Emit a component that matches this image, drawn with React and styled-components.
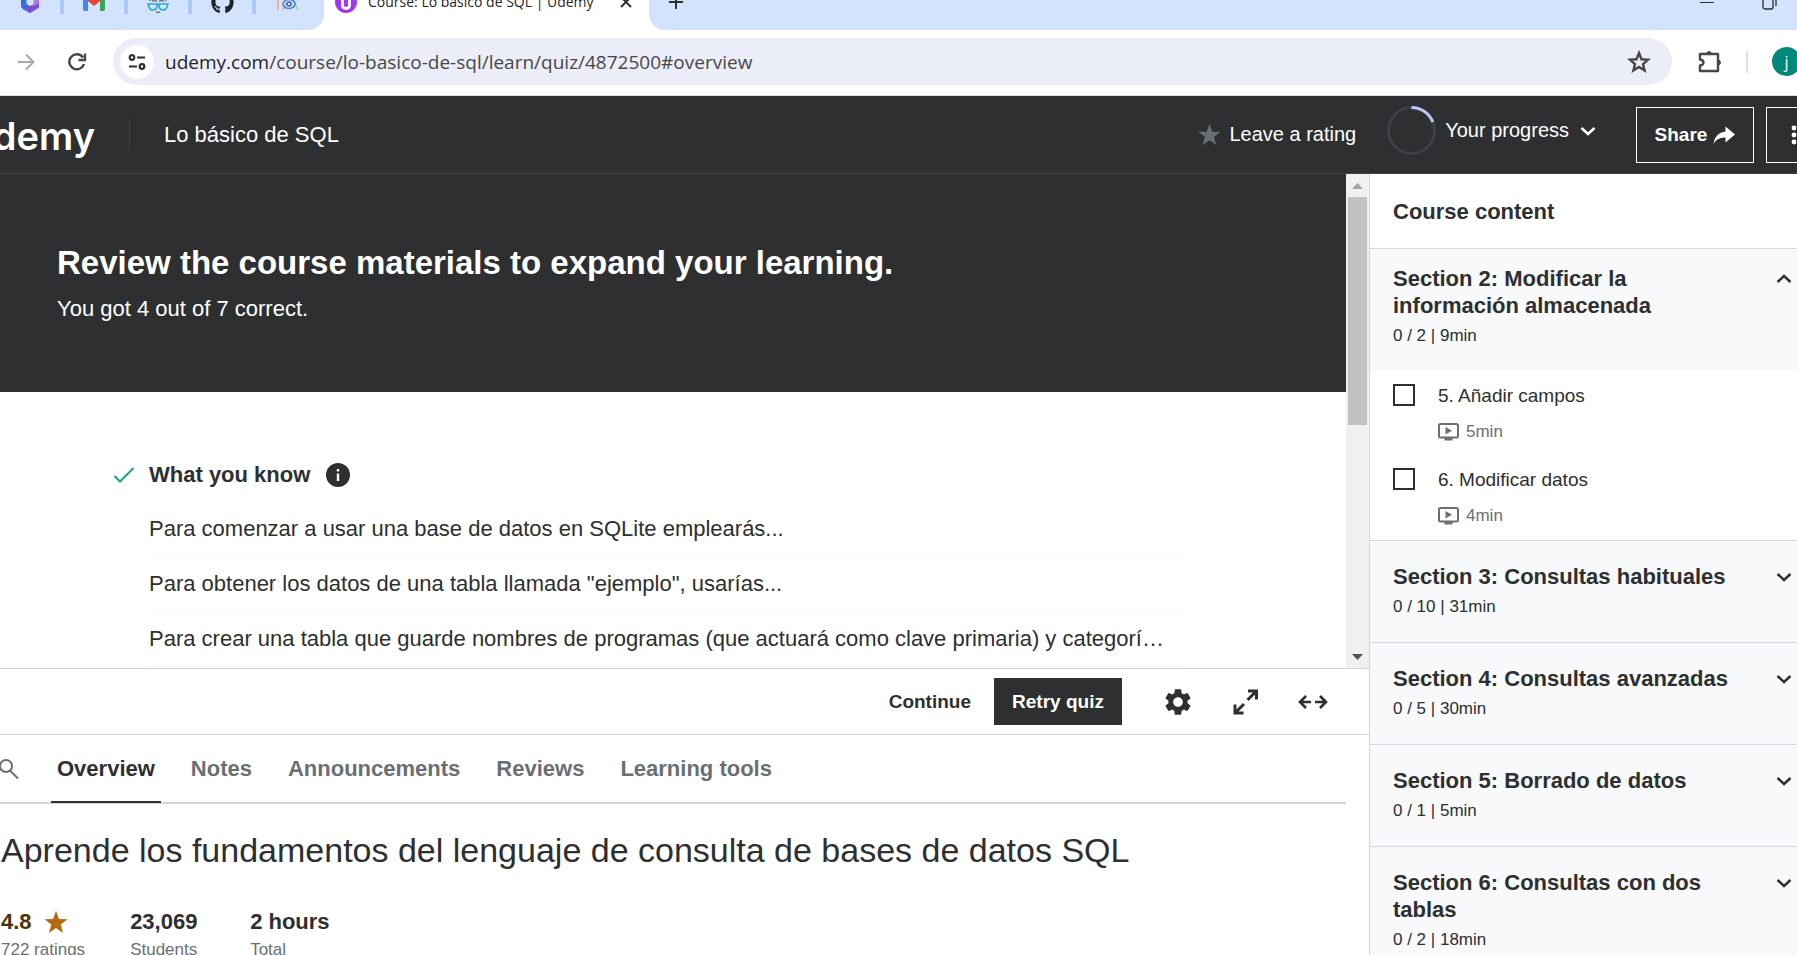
import React from "react";
import styled, { createGlobalStyle } from "styled-components";
import { FaGithub } from "react-icons/fa";
import { MdSettings } from "react-icons/md";

const ink = "#2d2f31";
const muted = "#6a6f73";
const line = "#d1d7dc";
const chrome = '"Open Sans", "Noto Sans", sans-serif';

const GlobalStyle = createGlobalStyle`
  *, *::before, *::after { box-sizing: border-box; }
  body {
    margin: 0;
    overflow: hidden;
    background: #fff;
    color: ${ink};
    font-family: "Liberation Sans", Arial, sans-serif;
    font-size: 22px;
  }
  h1, h2, h3, p, ul { margin: 0; padding: 0; font-size: inherit; }
  ul { list-style: none; }
  a { color: inherit; text-decoration: none; }
  svg { display: block; flex: none; }
  button {
    display: flex;
    align-items: center;
    justify-content: center;
    margin: 0;
    padding: 0;
    border: 0;
    background: none;
    color: inherit;
    font: inherit;
    cursor: pointer;
  }
`;

const Page = styled.div`
  display: flex;
  flex-direction: column;
  height: 100vh;
  overflow: hidden;
`;

/* Browser chrome */
const TabStrip = styled.div`
  display: flex;
  height: 30px;
  flex: none;
  overflow: hidden;
  background: #fff;
  font-family: ${chrome};
`;

const StripSegment = styled.div`
  display: flex;
  flex: ${(p) => (p.$grow ? "1" : "none")};
  width: ${(p) => (p.$grow ? "auto" : "324px")};
  overflow: hidden;
  background: #d3e3fd;
  border-radius: ${(p) => (p.$grow ? "0 0 0 16px" : "0 0 16px 0")};
`;

const StripContent = styled.div`
  display: flex;
  flex: 1;
  align-items: center;
  height: 60px;
  margin-top: -28px;
`;

const PinnedTab = styled.button`
  width: 64px;
  height: 24px;
  border-right: ${(p) => (p.$last ? "0" : "4px solid #a8c7fa")};
`;

const ActiveTab = styled.div`
  display: flex;
  width: 325px;
  padding: 0 16px 0 11px;
`;

const TabTitle = styled.span`
  flex: 1;
  padding-left: 11px;
  font-size: 14px;
  line-height: 24px;
  color: #1f1f1f;
  white-space: nowrap;
`;

const WindowButtons = styled.div`
  display: flex;
  gap: 48px;
  margin-left: auto;
  padding-right: 20px;
`;

const NewTab = styled.button`
  margin-left: 19px;
`;

const Toolbar = styled.div`
  display: flex;
  flex: none;
  align-items: center;
  height: 66px;
  padding: 0 0 2px 15px;
  border-bottom: 1px solid #dadce0;
  overflow: hidden;
  font-family: ${chrome};
`;

const ReloadButton = styled.button`
  margin: 0 25px 0 29px;
`;

const AddressBar = styled.div`
  display: flex;
  flex: 1;
  align-items: center;
  height: 47px;
  padding: 0 21px 0 7px;
  border-radius: 24px;
  background: #ebeef8;
`;

const SiteInfo = styled.button`
  width: 34px;
  height: 34px;
  border-radius: 50%;
  background: #fff;
`;

const Url = styled.p`
  flex: 1;
  padding-left: 11px;
  font-size: 19px;
  color: #474747;
  white-space: nowrap;
  b { font-weight: 400; color: #1f1f1f; }
`;

const ToolbarEnd = styled.div`
  display: flex;
  align-items: center;
  gap: 24px;
  width: 125px;
  padding-left: 26px;
`;

const ToolbarDivider = styled.span`
  flex: none;
  width: 2px;
  height: 22px;
  background: #d3e3fd;
`;

const Avatar = styled.button`
  flex: none;
  width: 29px;
  height: 29px;
  border-radius: 50%;
  background: #00897b;
  color: #fff;
  font-size: 16px;
`;

/* Course header */
const Header = styled.header`
  display: flex;
  flex: none;
  align-items: center;
  height: 78px;
  overflow: hidden;
  border-bottom: 1px solid #3e4143;
  background: ${ink};
  color: #fff;
`;

const Logo = styled.a`
  display: flex;
  justify-content: flex-end;
  width: 95px;
  padding-top: 2px;
  overflow: hidden;
  font-family: Inter, sans-serif;
  font-size: 38px;
  font-weight: 600;
  line-height: 50px;
`;

const HeaderDivider = styled.span`
  width: 1px;
  height: 31px;
  margin: 0 34px;
  background: #3e4143;
`;

const CourseName = styled.a`
  flex: 1;
  font-size: 22px;
`;

const HeaderAction = styled.button`
  gap: ${(p) => p.$gap}px;
  margin-right: ${(p) => p.$after}px;
  padding-bottom: ${(p) => (p.$raised ? "8px" : "0")};
  font-size: 20px;
`;

const OutlineButton = styled.button`
  flex: none;
  gap: 6px;
  width: ${(p) => p.$width}px;
  height: 56px;
  margin-right: ${(p) => p.$after}px;
  border: 1px solid #fff;
  font-size: 19px;
  font-weight: 700;
`;

/* Body */
const Body = styled.div`
  display: flex;
  flex: 1;
  min-height: 0;
`;

const Main = styled.main`
  flex: 1;
  min-width: 0;
  overflow: hidden;
`;

const Player = styled.section`
  display: flex;
  border-bottom: 1px solid ${line};
`;

const QuizPane = styled.div`
  flex: 1;
  min-width: 0;
  padding-bottom: 2px;
`;

const Banner = styled.div`
  padding: 67px 57px;
  background: ${ink};
  color: #fff;
  h2 { font-size: 33px; line-height: 44px; }
  p { margin-top: 8px; line-height: 32px; }
`;

const Review = styled.div`
  padding: 68px 165px 0 113px;
`;

const ReviewHeading = styled.div`
  display: flex;
  align-items: center;
  height: 30px;
  margin-bottom: 11px;
  gap: 14px;
  h3 { margin-right: 2px; }
`;

const ReviewList = styled.ul`
  && { padding-left: 36px; }
`;

const ReviewItem = styled.li`
  padding-top: 2px;
  border-bottom: 1px solid #f7f9fa;
  line-height: 52px;
  white-space: nowrap;
  overflow: hidden;
  text-overflow: ellipsis;
`;

const ScrollTrack = styled.div`
  display: flex;
  flex-direction: column;
  flex: none;
  width: 23px;
  padding: 0 2px;
  background: #f0f0f0;
`;

const ScrollArrow = styled.button`
  height: 23px;
`;

const ScrollThumb = styled.div`
  height: 228px;
  margin-bottom: auto;
  background: #c1c1c1;
`;

const Controls = styled.div`
  display: flex;
  align-items: center;
  justify-content: flex-end;
  height: 66px;
  padding-right: 41px;
  border-bottom: 1px solid ${line};
  font-size: 19px;
  font-weight: 700;
`;

const RetryButton = styled.button`
  width: 128px;
  height: 47px;
  margin: 0 40px 0 23px;
  background: ${ink};
  color: #fff;
`;

const IconButtons = styled.div`
  display: flex;
  align-items: center;
  gap: 39px;
`;

const Tabs = styled.nav`
  display: flex;
  align-items: center;
  height: 69px;
  margin-right: 23px;
  border-bottom: 2px solid ${line};
  font-weight: 700;
  color: ${muted};
`;

const SearchButton = styled.button`
  width: 19px;
  margin-right: 32px;
  overflow: hidden;
  justify-content: flex-end;
`;

const Tab = styled.button`
  height: 69px;
  margin-right: 24px;
  padding: 2px 6px 0;
  border-bottom: 2px solid ${(p) => (p.$active ? ink : "transparent")};
  color: ${(p) => (p.$active ? ink : muted)};
  font-weight: 700;
`;

const Overview = styled.section`
  padding: 23px 1px 0;
  h1 { font-size: 34px; font-weight: 400; line-height: 46px; white-space: nowrap; }
`;

const Stats = styled.div`
  display: flex;
  gap: 45px;
  margin-top: 36px;
`;

const Stat = styled.div`
  display: flex;
  flex-direction: column;
  gap: 2px;
  min-width: 75px;
  color: ${muted};
  font-size: 17px;
  line-height: 26px;
  white-space: nowrap;
`;

const StatValue = styled.strong`
  display: flex;
  align-items: center;
  gap: 12px;
  color: ${(p) => (p.$rating ? "#4d3105" : ink)};
  font-size: 22px;
  svg { color: #b4690e; }
`;

/* Sidebar */
const Sidebar = styled.aside`
  flex: none;
  width: 428px;
  overflow: hidden;
  border-left: 1px solid ${line};
  background: #fff;
`;

const SidebarTitle = styled.h2`
  padding: 2px 23px 0;
  border-bottom: 1px solid ${line};
  line-height: 72px;
`;

const Section = styled.section`
  border-bottom: 1px solid ${line};
`;

const SectionToggle = styled.button`
  width: 100%;
  align-items: flex-start;
  justify-content: space-between;
  padding: ${(p) => (p.$open ? "16px 3px 22px 23px" : "22px 3px 23px 23px")};
  background: #f7f9fa;
  text-align: left;
  svg { margin-top: 4px; }
`;

const SectionName = styled.span`
  display: block;
  max-width: 348px;
  font-weight: 700;
  line-height: 27px;
`;

const SectionMeta = styled.span`
  display: block;
  margin-top: 5px;
  font-size: 17px;
  line-height: 24px;
`;

const Lectures = styled.ul`
  && { padding-bottom: 2px; }
`;

const Lecture = styled.li`
  display: flex;
  height: 84px;
  padding: 14px 23px 0;
  gap: 23px;
`;

const Checkbox = styled.input`
  appearance: none;
  flex: none;
  width: 22px;
  height: 22px;
  margin: 0;
  border: 2px solid ${ink};
  background: #fff;
`;

const LectureName = styled.label`
  display: block;
  font-size: 19px;
  line-height: 24px;
`;

const LectureTime = styled.span`
  display: flex;
  align-items: center;
  gap: 7px;
  margin-top: 12px;
  color: ${muted};
  font-size: 17px;
  line-height: 24px;
`;

const Stroke = ({ size = 20, w = 2, box = 24, children, ...rest }) => (
  <svg width={size} height={size} viewBox={`0 0 ${box} ${box}`} fill="none" stroke="currentColor" strokeWidth={w} aria-hidden="true" {...rest}>
    {children}
  </svg>
);

const Chevron = ({ up }) => (
  <Stroke size={20} box={20} w={2.4}>
    <path d={up ? "M3.500 13 10 7l6.500 6" : "M3.500 7 10 13l6.500-6"} />
  </Stroke>
);

const Star = ({ size, ...rest }) => (
  <svg width={size} height={size} viewBox="0 0 24 24" fill="currentColor" aria-hidden="true" {...rest}>
    <path d="m12 .8 2.900 8.200 8.600.2-6.800 5.300 2.400 8.400-7.100-4.900-7.100 4.900 2.400-8.400L.5 9.200 9.100 9z" />
  </svg>
);

const CopilotIcon = () => (
  <svg width="22" height="22" viewBox="0 0 22 22" aria-hidden="true">
    <path d="M11 0 2 5v11l3 3 6-3V7l6-3z" fill="#3a6fe0" />
    <path d="M20 5 13 2v7l1 2-3 6-6 2 6 3 9-5z" fill="#b07ae6" />
    <path d="m5 18 6-4 4 1 5-3v4l-9 6z" fill="#7a4fd0" />
    <path d="M7.500 9 11 7l3.500 2v4L11 15l-3.500-2z" fill="#d3e3fd" />
  </svg>
);

const GmailIcon = () => (
  <svg width="22" height="18" viewBox="0 0 22 18" aria-hidden="true">
    <path d="M0 2v14q0 2 2 2h3V5z" fill="#4285f4" />
    <path d="M22 2v14q0 2-2 2h-3V5z" fill="#34a853" />
    <path d="m0 2 5-1 6 5 6-5 5 1v2L11 13 0 4z" fill="#ea4335" />
  </svg>
);

const GlassesIcon = () => (
  <svg width="22" height="22" viewBox="0 0 22 22" fill="none" strokeWidth="1.500" aria-hidden="true">
    <path d="M3 10V4q8-5 16 0v6M5 10.500q3-2 5 0m2 0q3-2 5 0" stroke="#777" />
    <path d="M1 13h9v3q-1 3-4 3t-4-3zM12 13h9l-1 3q-1 3-4 3t-4-3zM10 13.500h2" stroke="#2fa4d7" fill="#c6ecfa" />
    <path d="M9 21q2 1 4 0" stroke="#777" />
  </svg>
);

const OrbitIcon = () => (
  <svg width="22" height="18" viewBox="0 0 22 18" fill="none" strokeWidth="1.500" aria-hidden="true">
    <path d="M1 17V7q4-8 9-5M10 9 6 17" stroke="#f2a27e" />
    <path d="M21 17 15 5l-3-4M16 15l3-6" stroke="#a8d672" />
    <ellipse cx="12" cy="11" rx="6" ry="4.500" stroke="#4a7fd8" />
    <circle cx="12" cy="11" r="2" stroke="#3b62b5" />
  </svg>
);

const UdemyFavicon = () => (
  <svg width="22" height="22" viewBox="0 0 22 22" aria-hidden="true">
    <circle cx="11" cy="11" r="11" fill="#a435f0" />
    <path d="M7.500 6v8q0 3.500 3.500 3.500t3.500-3.500V6" fill="none" stroke="#fff" strokeWidth="2.800" />
  </svg>
);

const VideoIcon = () => (
  <svg width="21" height="18" viewBox="0 0 21 18" aria-hidden="true">
    <rect x="1" y="1" width="19" height="13.500" rx="1.500" fill="none" stroke="currentColor" strokeWidth="2" />
    <path d="M7.500 4v7.500L14 7.700zM6.500 15h8v2.500h-8z" fill="currentColor" />
  </svg>
);

const ProgressRing = () => (
  <svg width="49" height="49" viewBox="0 0 49 49" fill="none" strokeWidth="3" aria-hidden="true">
    <circle cx="24.500" cy="24.500" r="23" stroke="#3e4143" />
    <path d="M24.500 1.500a23 23 0 0 1 21.400 14.600" stroke="#c0c4fc" />
  </svg>
);

const pinned = [
  ["Copilot", <CopilotIcon />],
  ["Gmail", <GmailIcon />],
  ["Profile", <GlassesIcon />],
  ["GitHub", <FaGithub size={23} color="#1f2328" />],
  ["Science", <OrbitIcon />],
];

const reviewItems = [
  "Para comenzar a usar una base de datos en SQLite emplearás...",
  'Para obtener los datos de una tabla llamada "ejemplo", usarías...',
  "Para crear una tabla que guarde nombres de programas (que actuará como clave primaria) y categorí…",
];

const sections = [
  {
    name: "Section 2: Modificar la información almacenada",
    meta: "0 / 2 | 9min",
    lectures: [
      ["5. Añadir campos", "5min"],
      ["6. Modificar datos", "4min"],
    ],
  },
  { name: "Section 3: Consultas habituales", meta: "0 / 10 | 31min" },
  { name: "Section 4: Consultas avanzadas", meta: "0 / 5 | 30min" },
  { name: "Section 5: Borrado de datos", meta: "0 / 1 | 5min" },
  { name: "Section 6: Consultas con dos tablas", meta: "0 / 2 | 18min" },
];

const BrowserChrome = () => (
  <>
    <TabStrip>
      <StripSegment>
        <StripContent>
          {pinned.map(([name, icon], i) => (
            <PinnedTab key={name} aria-label={name} $last={i === pinned.length - 1}>
              {icon}
            </PinnedTab>
          ))}
        </StripContent>
      </StripSegment>
      <ActiveTab>
        <StripContent>
          <UdemyFavicon />
          <TabTitle>Course: Lo básico de SQL | Udemy</TabTitle>
          <button aria-label="Close tab">
            <Stroke size={14} box={14} w={2}><path d="m2 2 10 10M12 2 2 12" /></Stroke>
          </button>
        </StripContent>
      </ActiveTab>
      <StripSegment $grow>
        <StripContent>
          <NewTab aria-label="New tab">
            <Stroke size={16} box={16} w={2}><path d="M8 1v14M1 8h14" /></Stroke>
          </NewTab>
          <WindowButtons>
            <button aria-label="Minimize">
              <Stroke size={14} box={14} w={1}><path d="M0 7.500h14" /></Stroke>
            </button>
            <button aria-label="Restore">
              <Stroke size={15} box={15} w={1.300}>
                <rect x="1" y="4" width="10" height="10" rx="2" />
                <path d="M4 1h7q3 0 3 3v7" />
              </Stroke>
            </button>
          </WindowButtons>
        </StripContent>
      </StripSegment>
    </TabStrip>
    <Toolbar>
      <button aria-label="Forward">
        <Stroke size={22} box={22} w={2} color="#a9a9a9"><path d="M3 11h15M11 3.500l7.500 7.500-7.500 7.500" /></Stroke>
      </button>
      <ReloadButton aria-label="Reload">
        <Stroke size={22} box={22} w={2.400} color="#474747">
          <path d="M18 13a7.500 7.500 0 1 1-1-6.500M19 2.500V9h-6.500" />
        </Stroke>
      </ReloadButton>
      <AddressBar>
        <SiteInfo aria-label="Site information">
          <Stroke size={18} box={18} w={2.200}>
            <circle cx="4" cy="4.500" r="2.300" />
            <circle cx="14" cy="13.500" r="2.300" />
            <path d="M9 4.500h8M1 13.500h8" />
          </Stroke>
        </SiteInfo>
        <Url><b>udemy.com</b>/course/lo-basico-de-sql/learn/quiz/4872500#overview</Url>
        <button aria-label="Bookmark this page">
          <Stroke size={24} w={2.400} color="#474747">
            <path d="m12 3 2.500 6.300 6.500.500-5 4.300 1.600 6.400-5.600-3.500-5.600 3.500L8 14.100 3 9.800l6.500-.500z" />
          </Stroke>
        </button>
      </AddressBar>
      <ToolbarEnd>
        <button aria-label="Extensions">
          <Stroke size={24} w={2.400} color="#474747">
            <path d="M2 4h18v17H2v-5.500q3.500-.500 3.500-3T2 9.500z" strokeLinejoin="round" />
            <path d="M8 3.500q3-4 6 0zM20.500 9.500q4 3 0 6z" fill="currentColor" strokeWidth="1" />
          </Stroke>
        </button>
        <ToolbarDivider />
        <Avatar aria-label="Account">j</Avatar>
      </ToolbarEnd>
    </Toolbar>
  </>
);

const CourseHeader = () => (
  <Header>
    <Logo href="#">udemy</Logo>
    <HeaderDivider />
    <CourseName href="#">Lo básico de SQL</CourseName>
    <HeaderAction $gap={8} $after={31}>
      <Star size={23} color={muted} />
      Leave a rating
    </HeaderAction>
    <HeaderAction $gap={9} $after={38} $raised>
      <ProgressRing />
      Your progress
      <Chevron />
    </HeaderAction>
    <OutlineButton $width={118} $after={12}>
      Share
      <svg width="22" height="20" viewBox="0 0 22 20" fill="currentColor" aria-hidden="true">
        <path d="M12.500 1.500 22 9.500l-9.500 8v-5Q4 12 .500 19 2 7.500 12.500 6.500z" />
      </svg>
    </OutlineButton>
    <OutlineButton $width={56} $after={-25} aria-label="More options">
      <svg width="6" height="20" viewBox="0 0 6 20" fill="currentColor" aria-hidden="true">
        <circle cx="3" cy="3" r="2.400" /><circle cx="3" cy="10" r="2.400" /><circle cx="3" cy="17" r="2.400" />
      </svg>
    </OutlineButton>
  </Header>
);

export default function App() {
  return (
    <Page>
      <GlobalStyle />
      <BrowserChrome />
      <CourseHeader />
      <Body>
        <Main>
          <Player>
            <QuizPane>
              <Banner>
                <h2>Review the course materials to expand your learning.</h2>
                <p>You got 4 out of 7 correct.</p>
              </Banner>
              <Review>
                <ReviewHeading>
                  <Stroke size={22} box={22} w={2} color="#19a38c"><path d="m1.500 12 5.500 5.500L20.500 4" /></Stroke>
                  <h3>What you know</h3>
                  <button aria-label="More information">
                    <svg width="24" height="24" viewBox="0 0 24 24" aria-hidden="true">
                      <circle cx="12" cy="12" r="12" fill={ink} />
                      <path d="M10.800 6h2.400v2.400h-2.400zM10.800 10.500h2.400V18h-2.400z" fill="#fff" />
                    </svg>
                  </button>
                </ReviewHeading>
                <ReviewList>
                  {reviewItems.map((t) => <ReviewItem key={t}>{t}</ReviewItem>)}
                </ReviewList>
              </Review>
            </QuizPane>
            <ScrollTrack>
              <ScrollArrow aria-label="Scroll up">
                <svg width="11" height="6" viewBox="0 0 11 6" fill="#a3a3a3" aria-hidden="true"><path d="M0 6 5.500 0 11 6z" /></svg>
              </ScrollArrow>
              <ScrollThumb />
              <ScrollArrow aria-label="Scroll down">
                <svg width="11" height="6" viewBox="0 0 11 6" fill="#505050" aria-hidden="true"><path d="m0 0 5.500 6L11 0z" /></svg>
              </ScrollArrow>
            </ScrollTrack>
          </Player>
          <Controls>
            <button>Continue</button>
            <RetryButton>Retry quiz</RetryButton>
            <IconButtons>
              <button aria-label="Settings"><MdSettings size={32} /></button>
              <button aria-label="Full screen">
                <Stroke size={26} box={26} w={3}>
                  <path d="M15 2h8.500v8.500M23 2.500 14.500 11M2 15.500V24h8.500M2.500 23.500 11 15" />
                </Stroke>
              </button>
              <button aria-label="Expanded view">
                <svg width="30" height="16" viewBox="0 0 30 16" fill="none" stroke="currentColor" strokeWidth="2.600" aria-hidden="true">
                  <path d="M8 2 2 8l6 6M2 8h11M22 2l6 6-6 6M28 8H17" />
                </svg>
              </button>
            </IconButtons>
          </Controls>
          <Tabs>
            <SearchButton aria-label="Search">
              <Stroke size={22} box={22} w={2}>
                <circle cx="9" cy="8" r="6" /><path d="m13 12.500 8 8" />
              </Stroke>
            </SearchButton>
            <Tab $active>Overview</Tab>
            <Tab>Notes</Tab>
            <Tab>Announcements</Tab>
            <Tab>Reviews</Tab>
            <Tab>Learning tools</Tab>
          </Tabs>
          <Overview>
            <h1>Aprende los fundamentos del lenguaje de consulta de bases de datos SQL</h1>
            <Stats>
              <Stat><StatValue $rating>4.8 <Star size={24} /></StatValue>722 ratings</Stat>
              <Stat><StatValue>23,069</StatValue>Students</Stat>
              <Stat><StatValue>2 hours</StatValue>Total</Stat>
            </Stats>
          </Overview>
        </Main>
        <Sidebar>
          <SidebarTitle>Course content</SidebarTitle>
          {sections.map((s) => (
            <Section key={s.name}>
              <SectionToggle $open={!!s.lectures} aria-expanded={!!s.lectures}>
                <span>
                  <SectionName>{s.name}</SectionName>
                  <SectionMeta>{s.meta}</SectionMeta>
                </span>
                <Chevron up={!!s.lectures} />
              </SectionToggle>
              {s.lectures && (
                <Lectures>
                  {s.lectures.map(([name, time], i) => (
                    <Lecture key={name}>
                      <Checkbox type="checkbox" id={`lecture-${i}`} />
                      <div>
                        <LectureName htmlFor={`lecture-${i}`}>{name}</LectureName>
                        <LectureTime><VideoIcon />{time}</LectureTime>
                      </div>
                    </Lecture>
                  ))}
                </Lectures>
              )}
            </Section>
          ))}
        </Sidebar>
      </Body>
    </Page>
  );
}
